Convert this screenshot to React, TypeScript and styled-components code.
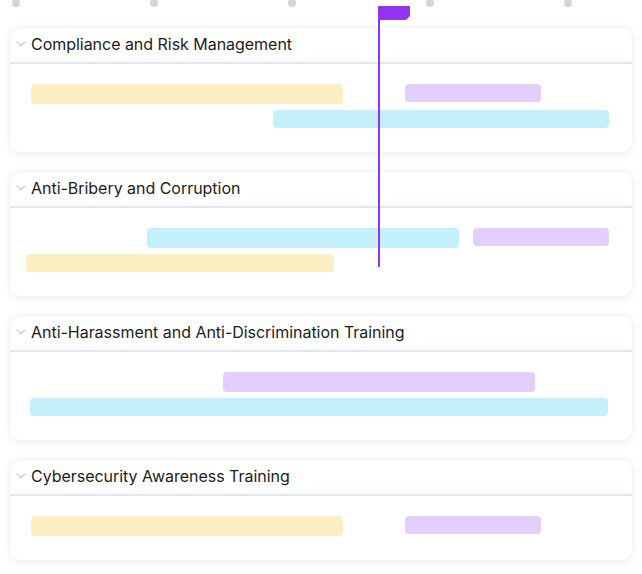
import React from "react";
import styled, { createGlobalStyle } from "styled-components";

const GlobalStyle = createGlobalStyle`
  html, body { margin: 0; padding: 0; background: #ffffff; }
  body { font-family: Inter, "Noto Sans", "Liberation Sans", sans-serif; }
`;

type Tone = "yellow" | "purple" | "cyan";
const toneColor: Record<Tone, string> = {
  yellow: "#fdefc4",
  purple: "#e3cefd",
  cyan: "#c3f0fb",
};

type Bar = { tone: Tone; start: number; end: number; h: number };
type Group = { title: string; rows: Bar[][] };

const groups: Group[] = [
  {
    title: "Compliance and Risk Management",
    rows: [
      [
        { tone: "yellow", start: 21, end: 333, h: 20 },
        { tone: "purple", start: 395, end: 531, h: 18 },
      ],
      [{ tone: "cyan", start: 263, end: 599, h: 18 }],
    ],
  },
  {
    title: "Anti-Bribery and Corruption",
    rows: [
      [
        { tone: "cyan", start: 137, end: 449, h: 20 },
        { tone: "purple", start: 463, end: 599, h: 18 },
      ],
      [{ tone: "yellow", start: 16, end: 324, h: 18 }],
    ],
  },
  {
    title: "Anti-Harassment and Anti-Discrimination Training",
    rows: [
      [{ tone: "purple", start: 213, end: 525, h: 20 }],
      [{ tone: "cyan", start: 20, end: 598, h: 18 }],
    ],
  },
  {
    title: "Cybersecurity Awareness Training",
    rows: [
      [
        { tone: "yellow", start: 21, end: 333, h: 20 },
        { tone: "purple", start: 395, end: 531, h: 18 },
      ],
    ],
  },
];

const Page = styled.div`
  position: relative;
  width: 642px;
  height: 574px;
  overflow: hidden;
  background: #ffffff;
`;

const TickRow = styled.div`
  display: flex;
  gap: 130px;
  padding-left: 12px;
  height: 28px;
`;

const Tick = styled.span`
  width: 8px;
  height: 8px;
  margin-top: -1px;
  border-radius: 50%;
  background: #d4d4d6;
`;

const CardList = styled.div`
  display: flex;
  flex-direction: column;
  gap: 20px;
  padding: 0 10px;
`;

const Card = styled.section`
  background: #ffffff;
  border-radius: 10px;
  box-shadow: 0 1px 8px rgba(20, 20, 40, 0.09), 0 0 1px rgba(20, 20, 40, 0.06);
  overflow: hidden;
`;

const Header = styled.div`
  box-sizing: border-box;
  display: flex;
  align-items: center;
  gap: 5px;
  height: 36px;
  padding: 0 0 3px 6px;
  border-bottom: 2px solid #e2e6f1;
`;

const Chevron = styled.svg`
  width: 10px;
  height: 10px;
  flex: none;
  margin-top: 1px;
`;

const Title = styled.h3`
  margin: 0;
  font-size: 16px;
  font-weight: 400;
  color: #1c1c21;
  letter-spacing: -0.03px;
  line-height: 20px;
`;

const Body = styled.div`
  display: flex;
  flex-direction: column;
  gap: 6px;
  padding: 20px 0 24px;
`;

const Lane = styled.div<{ $h: number }>`
  position: relative;
  height: ${(p) => p.$h}px;
`;

const BarBox = styled.div<{ $tone: Tone }>`
  position: absolute;
  top: 0;
  border-radius: 4px;
  background: ${(p) => toneColor[p.$tone]};
`;

const Marker = styled.svg`
  position: absolute;
  left: 378px;
  top: 6px;
  width: 32px;
  height: 261px;
  pointer-events: none;
`;

export default function App() {
  return (
    <>
      <GlobalStyle />
      <Page>
        <TickRow>
          {[0, 1, 2, 3, 4].map((i) => (
            <Tick key={i} />
          ))}
        </TickRow>
        <CardList>
          {groups.map((g) => (
            <Card key={g.title}>
              <Header>
                <Chevron viewBox="0 0 10 10">
                  <path
                    d="M1 3 L5 6.6 L9 3"
                    fill="none"
                    stroke="#c6cee2"
                    strokeWidth="1.5"
                    strokeLinecap="round"
                    strokeLinejoin="round"
                  />
                </Chevron>
                <Title>{g.title}</Title>
              </Header>
              <Body>
                {g.rows.map((row, ri) => (
                  <Lane key={ri} $h={Math.max(...row.map((b) => b.h))}>
                    {row.map((b, bi) => (
                      <BarBox
                        key={bi}
                        $tone={b.tone}
                        style={{ left: b.start, width: b.end - b.start, height: b.h }}
                      />
                    ))}
                  </Lane>
                ))}
              </Body>
            </Card>
          ))}
        </CardList>
        <Marker viewBox="0 0 32 261">
          <path d="M0 0 H32 V10 L28 14 H0 Z" fill="#9234f0" />
          <rect x="0" y="0" width="2" height="261" fill="#9234f0" />
        </Marker>
      </Page>
    </>
  );
}
